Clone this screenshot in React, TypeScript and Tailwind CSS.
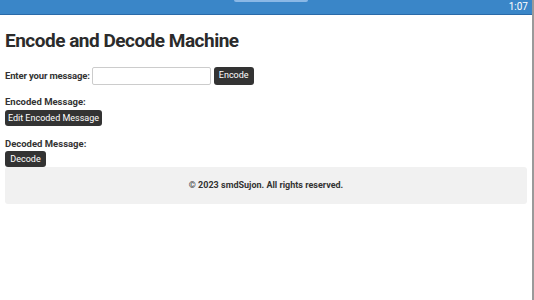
export default function App() {
  return (
    <div className="flex min-h-[300px] w-[534px] bg-white font-['Roboto',sans-serif] text-[#333]">
      <div className="flex-1">
        {/* status bar */}
        <div className="relative flex h-[15px] items-center justify-end border-b border-[#2a6aa8] bg-[#3a86c8] pr-[4px]">
          <div className="absolute left-[234px] top-0 h-[2px] w-[74px] rounded-b-sm bg-[#8ab8e6]" />
          <span className="text-[10px] leading-none text-white">1:07</span>
        </div>

        <div className="px-[5px]">
          <h1 className="mt-[14px] text-[19px] font-bold leading-[23px] tracking-[-0.5px] text-[#2b2b2b]">
            Encode and Decode Machine
          </h1>

          <div className="mt-[15px] flex items-center">
            <label className="text-[9.5px] font-bold tracking-[-0.15px]">Enter your message:</label>
            <input
              type="text"
              className="ml-[2px] h-[18px] w-[119px] rounded-[2px] border border-[#ccc] bg-white"
            />
            <button className="ml-[3px] h-[18px] w-[40px] rounded-[3px] bg-[#333] text-[9px] text-white">
              Encode
            </button>
          </div>

          <div className="mt-[11px]">
            <div className="text-[9.5px] font-bold leading-[12px]">Encoded Message:</div>
            <button className="mt-[2px] block h-[16px] w-[97px] rounded-[3px] bg-[#333] text-[9px] leading-none text-white">
              Edit Encoded Message
            </button>
          </div>

          <div className="mt-[12px]">
            <div className="text-[9.5px] font-bold leading-[12px]">Decoded Message:</div>
            <button className="mt-[1px] block h-[16px] w-[41px] rounded-[3px] bg-[#333] text-[9px] leading-none text-white">
              Decode
            </button>
          </div>

          <footer className="flex h-[37px] items-center justify-center rounded-[3px] bg-[#f1f1f1] text-[9px] font-bold">
            © 2023 smdSujon. All rights reserved.
          </footer>
        </div>
      </div>
      <div className="w-[2px] bg-[#9a9a9a]" />
    </div>
  );
}
